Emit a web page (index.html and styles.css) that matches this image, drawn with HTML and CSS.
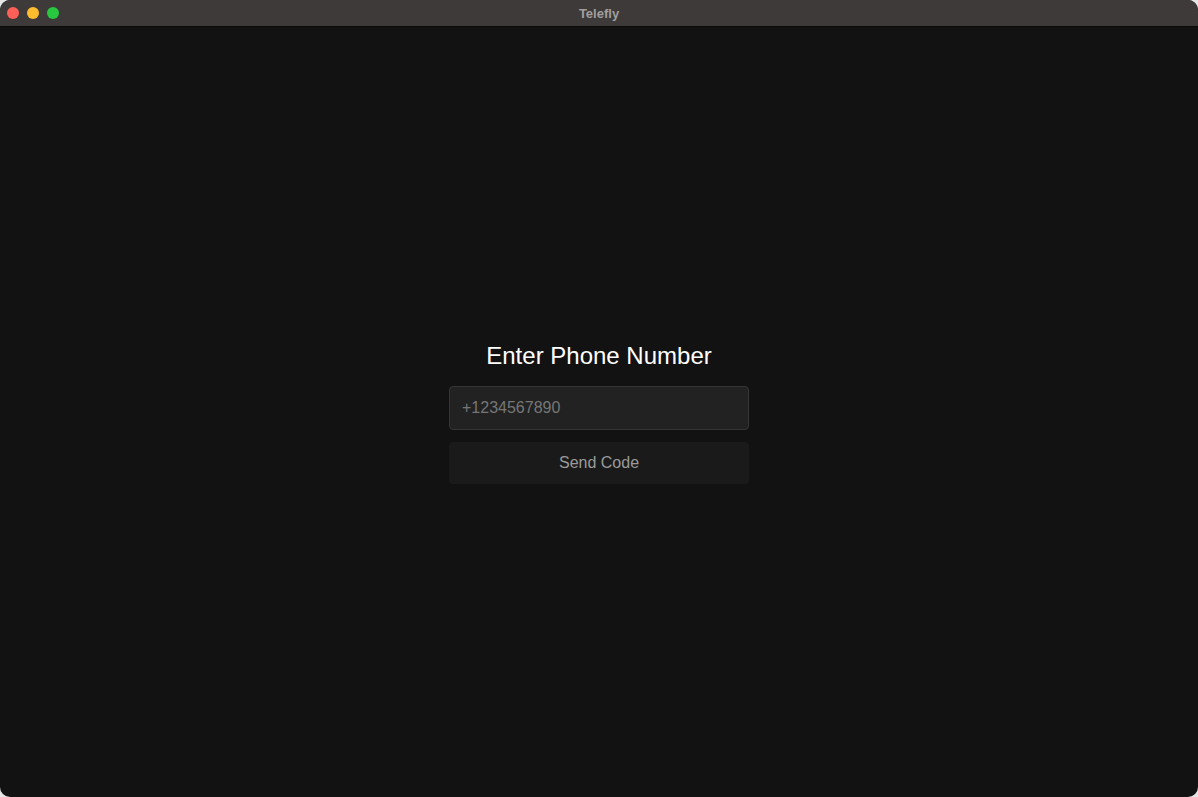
FILE: index.html
```html
<!DOCTYPE html>
<html lang="en">
<head>
<meta charset="utf-8">
<title>Telefly</title>
<link rel="stylesheet" href="styles.css">
</head>
<body>
<div class="window">
  <header class="titlebar">
    <div class="lights">
      <span class="light red"></span>
      <span class="light yellow"></span>
      <span class="light green"></span>
    </div>
    <div class="title">Telefly</div>
  </header>
  <main class="content">
    <form class="login" onsubmit="return false">
      <h1 class="heading">Enter Phone Number</h1>
      <input class="phone" type="text" placeholder="+1234567890">
      <button class="send" type="button">Send Code</button>
    </form>
  </main>
</div>
</body>
</html>
```

FILE: styles.css
```css
html, body {
  margin: 0;
  padding: 0;
  background: #e6e6e6;
}
body {
  width: 1198px;
  height: 797px;
  overflow: hidden;
  font-family: "Liberation Sans", Arial, sans-serif;
}
.window {
  width: 1198px;
  height: 797px;
  border-radius: 10px;
  overflow: hidden;
  background: #121212;
  display: flex;
  flex-direction: column;
}
.titlebar {
  height: 26px;
  flex: 0 0 26px;
  background: #3d3a39;
  border-bottom: 1px solid #0a0a0a;
  position: relative;
  display: flex;
  align-items: center;
  justify-content: center;
}
.lights {
  position: absolute;
  left: 7px;
  top: 7px;
  display: flex;
  gap: 8px;
}
.light {
  width: 12px;
  height: 12px;
  border-radius: 50%;
  display: block;
}
.red { background: #fe5f57; }
.yellow { background: #febc2e; }
.green { background: #28c840; }
.title {
  color: #a19f9e;
  font-size: 13px;
  font-weight: bold;
}
.content {
  flex: 1;
  display: flex;
  align-items: center;
  justify-content: center;
}
.login {
  width: 300px;
  display: flex;
  flex-direction: column;
}
.heading {
  margin: 0 0 16px;
  padding-top: 2px;
  font-size: 24px;
  line-height: 28px;
  font-weight: normal;
  color: #ffffff;
  text-align: center;
}
.phone {
  box-sizing: border-box;
  width: 300px;
  height: 44px;
  margin: 0 0 12px;
  padding: 0 12px;
  background: #222222;
  border: 1px solid #353535;
  border-radius: 4px;
  color: #dddddd;
  font-family: "Liberation Sans", Arial, sans-serif;
  font-size: 16px;
  outline: none;
}
.phone::placeholder {
  color: #767676;
}
.send {
  box-sizing: border-box;
  width: 300px;
  height: 42px;
  padding: 0;
  background: #1a1a1a;
  border: none;
  border-radius: 4px;
  color: #9a9a9a;
  font-family: "Liberation Sans", Arial, sans-serif;
  font-size: 16px;
}
```
